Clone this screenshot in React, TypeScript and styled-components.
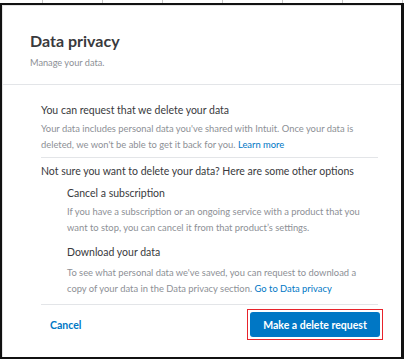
import * as React from 'react'
import styled, { createGlobalStyle } from 'styled-components'

const GlobalStyle = createGlobalStyle`
	html, body {
		margin: 0;
		padding: 0;
		background: #ffffff;
	}
	body {
		font-family: Lato, 'Open Sans', sans-serif;
		color: #393a3d;
	}
`

const Page = styled.div`
	width: 404px;
	height: 361px;
	overflow: hidden;
	background: #fff;
`

const TickStrip = styled.div`
	height: 3px;
	background: repeating-linear-gradient(90deg, transparent 0 42px, #c8c8c8 42px 43px, transparent 43px 60px);
`

const Frame = styled.div`
	box-sizing: border-box;
	width: 404px;
	height: 356px;
	border: 2px solid #111;
	border-right-width: 3px;
	background: #fff;
`

const Modal = styled.div`
	box-sizing: border-box;
	height: 100%;
	border-left: 1px solid #e4e4e4;
	border-top: 1px solid #e4e4e4;
	display: flex;
	flex-direction: column;
`

const Header = styled.header`
	padding: 25px 27px 0;
	height: 79px;
	box-sizing: border-box;
	border-bottom: 1px solid #e3e5e8;
`

const Title = styled.h1`
	margin: 0;
	font-size: 16px;
	font-weight: 700;
	line-height: 20px;
	color: #393a3d;
`

const Subtitle = styled.p`
	margin: 5px 0 0;
	font-size: 9.2px;
	line-height: 14px;
	color: #8d9096;
`

const Body = styled.div`
	padding: 0 23px 0 38px;
	display: flex;
	flex-direction: column;
`

const Section = styled.section<{ $indent?: boolean; $divider?: boolean }>`
	padding: ${({ $indent }) => ($indent ? '0 8px 0 26px' : '0')};
	border-bottom: ${({ $divider }) => ($divider ? '1px solid #e3e5e8' : 'none')};
`

const Heading = styled.h2<{ $top: number }>`
	margin: ${({ $top }) => $top}px 0 0;
	font-size: 10.5px;
	font-weight: 400;
	line-height: 16px;
	color: #393a3d;
`

const Text = styled.p<{ $top: number; $bottom: number }>`
	margin: ${({ $top }) => $top}px 0 ${({ $bottom }) => $bottom}px;
	font-size: 9.4px;
	line-height: 16px;
	color: #8d9096;
`

const Link = styled.a`
	color: #0077c5;
	text-decoration: none;
`

const Footer = styled.footer`
	margin: 0 23px 0 38px;
	border-top: 1px solid #e3e5e8;
	display: flex;
	align-items: center;
	justify-content: space-between;
	padding: 4px 0 0 9px;
`

const CancelButton = styled.button`
	border: none;
	background: none;
	padding: 0;
	font-family: inherit;
	font-size: 10.5px;
	font-weight: 700;
	color: #0077c5;
	cursor: pointer;
`

const Highlight = styled.div`
	border: 1.5px solid #e8232b;
	padding: 2px;
	margin-right: -5px;
`

const PrimaryButton = styled.button`
	display: block;
	width: 130px;
	height: 25px;
	border: none;
	border-radius: 3px;
	background: #0077c5;
	color: #fff;
	font-family: inherit;
	font-size: 10.5px;
	font-weight: 700;
	cursor: pointer;
`

export default function App() {
	return (
		<Page>
			<GlobalStyle />
			<TickStrip />
			<Frame>
				<Modal>
					<Header>
						<Title>Data privacy</Title>
						<Subtitle>Manage your data.</Subtitle>
					</Header>

					<Body>
						<Section $divider>
							<Heading $top={17}>You can request that we delete your data</Heading>
							<Text $top={3} $bottom={4}>
								Your data includes personal data you've shared with Intuit. Once your data is deleted, we
								won't be able to get it back for you. <Link href="#">Learn more</Link>
							</Text>
						</Section>

						<Section>
							<Heading $top={5}>Not sure you want to delete your data? Here are some other options</Heading>
						</Section>

						<Section $indent>
							<Heading $top={6}>Cancel a subscription</Heading>
							<Text $top={3} $bottom={0}>
								If you have a subscription or an ongoing service with a product that you want to stop, you
								can cancel it from that product’s settings.
							</Text>
						</Section>

						<Section $indent>
							<Heading $top={8}>Download your data</Heading>
							<Text $top={5} $bottom={7}>
								To see what personal data we've saved, you can request to download a copy of your data in
								the Data privacy section. <Link href="#">Go to Data privacy</Link>
							</Text>
						</Section>
					</Body>

					<Footer>
						<CancelButton>Cancel</CancelButton>
						<Highlight>
							<PrimaryButton>Make a delete request</PrimaryButton>
						</Highlight>
					</Footer>
				</Modal>
			</Frame>
		</Page>
	)
}
